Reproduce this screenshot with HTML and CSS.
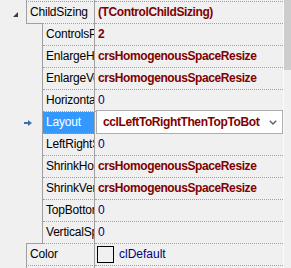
FILE: index.html
```html
<!DOCTYPE html>
<html lang="en">
<head>
  <meta charset="UTF-8" />
  <title>Object Inspector</title>
  <link rel="stylesheet" href="styles.css">
</head>
<body>
  <!-- ===== PROPERTY GRID ===== -->
  <div class="inspector">
    <div class="rows">
      <!-- tail of the row scrolled out above -->
      <div class="row top cap">
        <div class="key"><div class="gut"></div><div class="name"></div></div>
        <div class="val"></div>
      </div>

      <div class="row top open">
        <div class="key">
          <div class="gut">
            <svg class="expander" width="5" height="5" viewBox="0 0 5 5"><polygon points="5,0 5,5 0,5" /></svg>
          </div>
          <div class="name">ChildSizing</div>
        </div>
        <div class="val mod">(TControlChildSizing)</div>
      </div>

      <div class="row sub">
        <div class="key"><div class="gut"></div><div class="ind"></div><div class="name">ControlsPerLine</div></div>
        <div class="val mod">2</div>
      </div>
      <div class="row sub">
        <div class="key"><div class="gut"></div><div class="ind"></div><div class="name">EnlargeHorizontal</div></div>
        <div class="val mod">crsHomogenousSpaceResize</div>
      </div>
      <div class="row sub">
        <div class="key"><div class="gut"></div><div class="ind"></div><div class="name">EnlargeVertical</div></div>
        <div class="val mod">crsHomogenousSpaceResize</div>
      </div>
      <div class="row sub">
        <div class="key"><div class="gut"></div><div class="ind"></div><div class="name">HorizontalSpacing</div></div>
        <div class="val">0</div>
      </div>

      <!-- selected row with its inline editor -->
      <div class="row sub sel">
        <div class="key">
          <div class="gut">
            <svg class="pointer" width="8" height="6" viewBox="0 0 8 6"><path d="M0 2h4V0l4 3-4 3V4H0z" /></svg>
          </div>
          <div class="ind"></div>
          <div class="name">Layout</div>
        </div>
        <div class="val editing">
          <div class="edit">
            <span class="edit-text">cclLeftToRightThenTopToBottom</span>
            <svg class="chevron" width="8" height="5" viewBox="0 0 8 5"><polyline points="0.8,0.8 4,4 7.2,0.8" /></svg>
          </div>
        </div>
      </div>

      <div class="row sub">
        <div class="key"><div class="gut"></div><div class="ind"></div><div class="name">LeftRightSpacing</div></div>
        <div class="val">0</div>
      </div>
      <div class="row sub">
        <div class="key"><div class="gut"></div><div class="ind"></div><div class="name">ShrinkHorizontal</div></div>
        <div class="val mod">crsHomogenousSpaceResize</div>
      </div>
      <div class="row sub">
        <div class="key"><div class="gut"></div><div class="ind"></div><div class="name">ShrinkVertical</div></div>
        <div class="val mod">crsHomogenousSpaceResize</div>
      </div>
      <div class="row sub">
        <div class="key"><div class="gut"></div><div class="ind"></div><div class="name">TopBottomSpacing</div></div>
        <div class="val">0</div>
      </div>
      <div class="row sub">
        <div class="key"><div class="gut"></div><div class="ind last"></div><div class="name">VerticalSpacing</div></div>
        <div class="val">0</div>
      </div>

      <div class="row top">
        <div class="key"><div class="gut"></div><div class="name">Color</div></div>
        <div class="val color"><span class="swatch"></span>clDefault</div>
      </div>
      <div class="row top">
        <div class="key"><div class="gut"></div><div class="name">Constraints</div></div>
        <div class="val"></div>
      </div>
    </div>

    <div class="scrollbar"><div class="thumb"></div></div>
  </div>
</body>
</html>
```

FILE: styles.css
```css
/* === PALETTE === */
:root {
  --bg: #f0f0f0;
  --line: #a0a0a0;
  --maroon: #800000;
  --navy: #000080;
  --select: #3399ff;
}

* {
  margin: 0;
  padding: 0;
  box-sizing: border-box;
}
body {
  background: var(--bg);
  color: #000;
  font-family: "Liberation Sans", Arial, sans-serif;
  font-size: 12px;
  overflow: hidden;
}

/* 1) Grid + scrollbar */
.inspector {
  display: flex;
  height: 268px;
}
.rows {
  flex: 1;
  min-width: 0;
  overflow: hidden;
}
.scrollbar {
  width: 8px;
  flex: none;
  background: var(--bg);
  border-left: 1px solid #fafafa;
}
.thumb {
  height: 70px;
  background: #cdcdcd;
}

/* 2) Rows */
.row {
  display: flex;
  height: 22px;
}
.row.cap {
  height: 2px;
}
.key {
  width: 95px;
  flex: none;
  display: flex;
}
.gut {
  width: 26px;
  flex: none;
  display: flex;
  align-items: center;
}
.ind {
  width: 17px;
  flex: none;
  border-right: 1px solid var(--line);
}
.ind.last {
  border-bottom: 1px solid var(--line);
}
.name {
  flex: 1;
  min-width: 0;
  padding-left: 3px;
  line-height: 21px;
  letter-spacing: -0.2px;
  white-space: nowrap;
  overflow: hidden;
  border-right: 1px solid var(--line);
  border-bottom: 1px dotted var(--line);
}
.top .name {
  border-left: 1px solid var(--line);
}
/* expanded row: solid stub under the nested column, dots after it */
.open .name {
  border-bottom: 0;
  background:
    linear-gradient(var(--line), var(--line)) 0 100% / 16px 1px no-repeat,
    repeating-linear-gradient(90deg, var(--line) 0 1px, transparent 1px 2px) 0 100% / 100% 1px no-repeat;
}
.sel .name {
  background: var(--select);
  color: #fff;
}

.val {
  flex: 1;
  min-width: 0;
  padding-left: 3px;
  line-height: 21px;
  white-space: nowrap;
  overflow: hidden;
  color: var(--navy);
  border-bottom: 1px dotted var(--line);
}
.val.mod,
.edit-text {
  color: var(--maroon);
  font-weight: 700;
  letter-spacing: -0.4px;
}

/* 3) Glyphs */
.expander {
  margin: 3px 0 0 13px;
  fill: #3c3c3c;
}
.pointer {
  margin-left: 24px;
  flex: none;
  fill: #3d6db3;
}
.chevron {
  flex: none;
  margin-left: 9px;
  fill: none;
  stroke: #606060;
  stroke-width: 1.4;
}

/* 4) Inline editor of the selected row */
.val.editing {
  padding: 0;
  border-bottom: 0;
  overflow: visible;
}
.edit {
  height: 24px;
  margin: -2px 0 0 1px;
  display: flex;
  align-items: center;
  padding: 0 5px 0 6px;
  background: #fff;
  border: 1px solid #abadb3;
}
.edit-text {
  flex: 1;
  min-width: 0;
  overflow: hidden;
  white-space: nowrap;
}

/* 5) Colour value */
.val.color {
  display: flex;
  align-items: center;
  padding-left: 2px;
}
.swatch {
  width: 17px;
  height: 17px;
  margin-right: 5px;
  border: 1px solid #000;
}
```
